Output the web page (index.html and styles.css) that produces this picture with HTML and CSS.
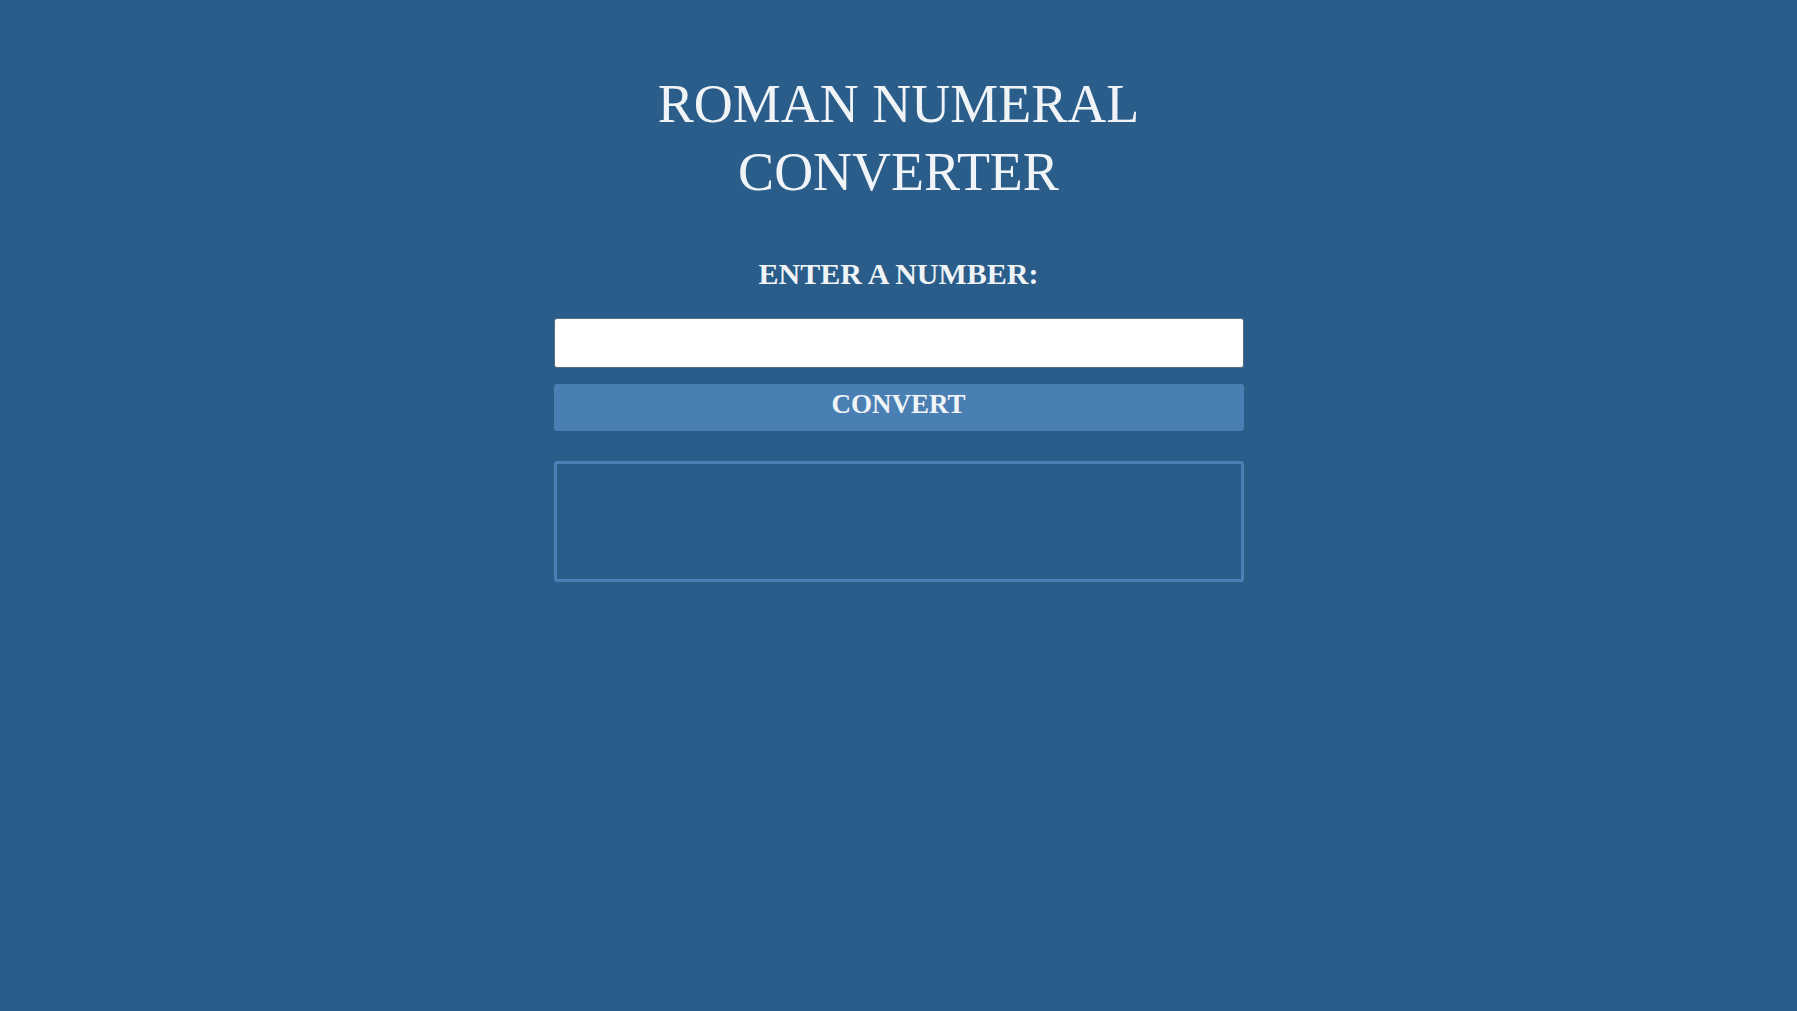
FILE: index.html
```html
<!DOCTYPE html>
<html lang='en'>

<head>
    <meta charset='UTF-8'>
    <meta name='viewport' content='width=device-width, initial-scale=1.0'>
    <title>Roman Numeral Converter</title>
    <link rel="stylesheet" href="styles.css">
</head>

<body>
    <main class="converter">
        <h1 class="title">ROMAN NUMERAL<br>CONVERTER</h1>
        <form id="form" class="form" action="javascript:void(0);">
            <label for="number" class="label">ENTER A NUMBER:</label>
            <input type="number" id="number" name="number" class="number-input">
            <button id="convert-btn" class="convert-btn">CONVERT</button>
        </form>
        <div id="output" class="output"></div>
    </main>
</body>

</html>
```

FILE: styles.css
```css
* {
    padding: 0;
    margin: 0;
    box-sizing: border-box;
}

body {
    background-color: #2a5d8a;
    color: #f0f4f7;
    font-family: "Liberation Serif", "Times New Roman", serif;
}

input,
button {
    font: inherit;
}

.converter {
    width: 100%;
    max-width: 690px;
    margin: 0 auto;
    padding-top: 70px;
    display: flex;
    flex-direction: column;
}

.title {
    font-size: 54px;
    font-weight: normal;
    line-height: 68px;
    text-align: center;
}

.form {
    margin-top: 48px;
    display: flex;
    flex-direction: column;
}

.label {
    font-size: 30px;
    font-weight: bold;
    line-height: 40px;
    text-align: center;
}

.number-input {
    margin-top: 24px;
    height: 50px;
    border: 1px solid #5a6b7c;
    border-radius: 3px;
    background-color: #fff;
    padding: 0 .5rem;
    font-size: 24px;
}

.convert-btn {
    margin-top: 16px;
    height: 47px;
    border: none;
    border-radius: 3px;
    background-color: #4a7fb3;
    color: #f0f4f7;
    font-size: 27px;
    font-weight: bold;
    line-height: 40px;
    padding-bottom: 8px;
    cursor: pointer;
}

.output {
    margin-top: 30px;
    height: 121px;
    border: 3px solid #4a80b5;
    border-radius: 3px;
}
```
